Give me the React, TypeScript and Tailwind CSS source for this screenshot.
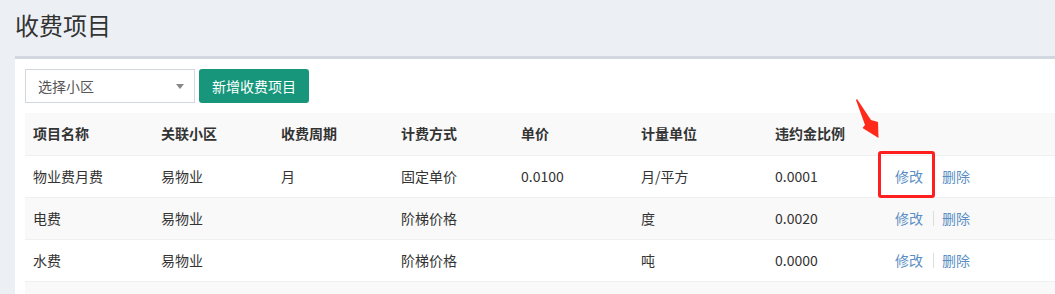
interface FeeItem {
  name: string;
  community: string;
  cycle: string;
  method: string;
  price: string;
  unit: string;
  penalty: string;
}

const items: FeeItem[] = [
  { name: "物业费月费", community: "易物业", cycle: "月", method: "固定单价", price: "0.0100", unit: "月/平方", penalty: "0.0001" },
  { name: "电费", community: "易物业", cycle: "", method: "阶梯价格", price: "", unit: "度", penalty: "0.0020" },
  { name: "水费", community: "易物业", cycle: "", method: "阶梯价格", price: "", unit: "吨", penalty: "0.0000" },
];

const cols = ["w-[128px]", "w-[120px]", "w-[120px]", "w-[120px]", "w-[120px]", "w-[134px]", "w-[120px]"];
const headers = ["项目名称", "关联小区", "收费周期", "计费方式", "单价", "计量单位", "违约金比例"];

const App = () => {
  return (
    <div
      className="relative w-[1055px] h-[294px] overflow-hidden bg-[#ecf0f5] text-[#333] text-[14px]"
      style={{ fontFamily: '"Noto Sans CJK SC", "Noto Sans", sans-serif' }}
    >
      <h1 className="px-[15px] pt-[7px] h-[56px] text-[24px] leading-[36px] text-[#333]">收费项目</h1>

      <div className="ml-[15px] border-t-[3px] border-[#d2d6de] bg-white pl-[10px] pt-[10px] h-[300px]">
        <div className="flex gap-[4px] mb-[10px]">
          <div className="w-[170px] h-[34px] border border-[#d2d6de] flex items-center justify-between pl-[12px] pr-[10px]">
            <span className="text-[#555]">选择小区</span>
            <span className="w-0 h-0 border-l-[4px] border-r-[4px] border-t-[5px] border-l-transparent border-r-transparent border-t-[#888]" />
          </div>
          <button className="w-[110px] h-[34px] rounded-[3px] bg-[#17967c] text-white">新增收费项目</button>
        </div>

        <table className="w-full table-fixed border-collapse">
          <thead>
            <tr className="h-[42px] bg-[#f9f9f9] border-b border-[#f0f0f0]">
              {headers.map((h, i) => (
                <th key={h} className={`${cols[i]} pl-[8px] text-left font-bold`}>
                  {h}
                </th>
              ))}
              <th />
            </tr>
          </thead>
          <tbody>
            {items.map((it, idx) => (
              <tr key={it.name} className={`h-[42px] border-b border-[#f0f0f0] ${idx % 2 === 1 ? "bg-[#f9f9f9]" : "bg-white"}`}>
                <td className="pl-[8px]">{it.name}</td>
                <td className="pl-[8px]">{it.community}</td>
                <td className="pl-[8px]">{it.cycle}</td>
                <td className="pl-[8px]">{it.method}</td>
                <td className="pl-[8px]">{it.price}</td>
                <td className="pl-[8px]">{it.unit}</td>
                <td className="pl-[8px]">{it.penalty}</td>
                <td className="pl-[8px]">
                  <div className="relative h-[20px] flex items-center text-[#5b8fc4]">
                    <span>修改</span>
                    <span className="ml-[10px] mr-[8px] w-px h-[15px] bg-[#ddd]" />
                    <span>删除</span>
                    {idx === 0 && (
                      <span className="absolute left-[-17px] top-[-15px] w-[57px] h-[47px] border-[3px] border-[#ff1f1f] rounded-[3px]" />
                    )}
                  </div>
                </td>
              </tr>
            ))}
            <tr className="h-[42px] bg-[#f9f9f9]">
              <td colSpan={8} />
            </tr>
          </tbody>
        </table>
      </div>

      <svg className="absolute left-[850px] top-[95px]" width="32" height="46" viewBox="0 0 32 46">
        <polygon points="7,4 21,25 28,27 28.5,43 12.5,33 15,30 6,5" fill="#ff2a1a" />
      </svg>
    </div>
  );
};

export default App;
